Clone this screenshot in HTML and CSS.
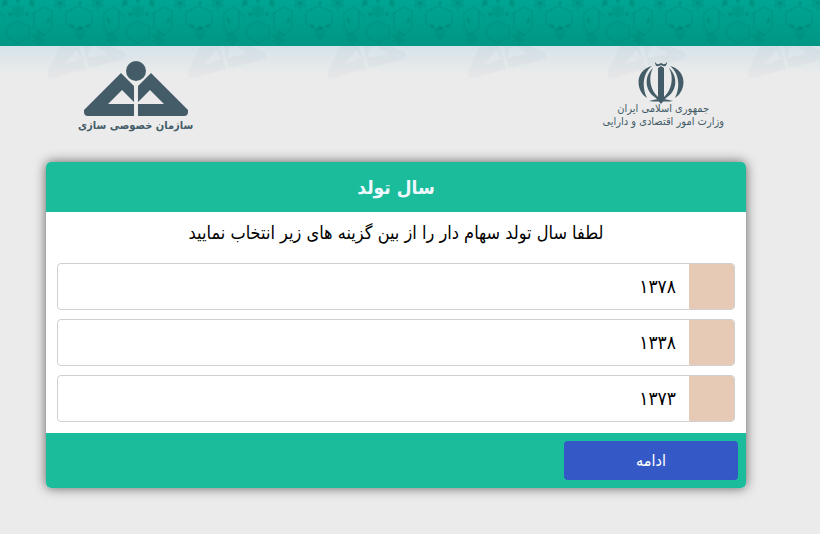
FILE: index.html
```
<!DOCTYPE html>
<html lang="fa" dir="rtl">
<head>
  <meta charset="UTF-8">
  <meta name="viewport" content="width=device-width, initial-scale=1.0">
  <title>سال تولد</title>
  <link rel="stylesheet" href="styles.css">
</head>
<body>
  <!-- top band -->
  <div class="top-band">
    <svg width="100%" height="46" aria-hidden="true">
      <defs>
        <path id="star" d="M0-8 3-4 7-4 5 0 7 4 3 4 0 8-3 4-7 4-5 0-7-4-3-4Z"/>
        <pattern id="girih" width="120" height="46" patternUnits="userSpaceOnUse">
          <g fill="none" stroke="#008170" stroke-opacity=".22" stroke-width="2">
            <path d="M18 21 29 27V37L18 43 7 37V27Z"/>
            <path d="M34 13 43 7 52 11V28L43 35 34 28Z"/>
            <path d="M104 13 113 7 119 11V28L111 35 104 28Z"/>
            <path d="M66 12 78 6 92 12V24L78 30 66 24Z"/>
            <path d="M0 12 6 18M30 18 36 12M30 0 34 8M2 8 6 0"/>
          </g>
          <g fill="#007e6e" fill-opacity=".2">
            <use href="#star" x="18" y="11"/>
            <use href="#star" x="39" y="38"/>
            <use href="#star" x="60" y="3"/>
            <use href="#star" x="80" y="33"/>
            <use href="#star" x="98" y="3"/>
            <use href="#star" x="112" y="38"/>
          </g>
          <g fill="#007a6a" fill-opacity=".32">
            <circle cx="18" cy="1" r="2"/>
            <circle cx="10" cy="14" r="2"/>
            <circle cx="27" cy="14" r="2"/>
            <circle cx="5" cy="3" r="3"/>
            <circle cx="32" cy="3" r="3"/>
            <path d="M49 17 51 20 48 24 46 21Z"/>
            <path d="M108 17 106 20 109 24 111 21Z"/>
            <circle cx="72" cy="26" r="2"/>
            <circle cx="88" cy="26" r="2"/>
            <circle cx="80" cy="28" r="2"/>
            <circle cx="60" cy="3" r="2"/>
            <circle cx="80" cy="3" r="2"/>
            <circle cx="98" cy="3" r="2"/>
            <circle cx="18" cy="38" r="1"/>
          </g>
        </pattern>
      </defs>
      <rect width="100%" height="46" fill="url(#girih)"/>
    </svg>
  </div>

  <!-- faded logos behind the header -->
  <div class="watermark">
    <svg width="100%" height="40" aria-hidden="true">
      <defs>
        <pattern id="ghost" width="140" height="40" patternUnits="userSpaceOnUse">
          <path fill="#445c68" fill-opacity=".035" fill-rule="evenodd" d="M60 0 48 25Q46 33 54 32L86 23 79 0ZM76 4 65 18 82 13ZM83 0 89 22 122 14Q130 10 124 6L110 0ZM90 1 87 12 108 8 96 0Z"/>
        </pattern>
      </defs>
      <rect width="100%" height="40" fill="url(#ghost)"/>
    </svg>
  </div>

  <header class="logos">
    <div class="logo ministry">
      <svg width="50" height="44" viewBox="0 0 50 44" fill="#445c68" aria-hidden="true">
        <path d="M17 1Q19 4 21 3L23 2 25 3Q27 4 29 1 29 6 25 5L23 4 21 5Q17 6 17 1Z"/>
        <path d="M20 7 23 5 26 7V37H28L23 43 18 37H20Z"/>
        <path d="M14 5C-3 9-3 29 9 37 4 27 4 13 14 5ZM32 5C49 9 49 29 37 37 42 27 42 13 32 5Z"/>
        <path d="M15 7C5 16 7 32 20 38V36C12 29 10 16 15 7ZM31 7C41 16 39 32 26 38V36C34 29 36 16 31 7Z"/>
        <path d="M11 40Q18 38 23 38 28 38 35 40 28 41 23 40 18 41 11 40Z"/>
      </svg>
      <span>جمهوری اسلامی ایران</span>
      <span>وزارت امور اقتصادی و دارایی</span>
    </div>
    <div class="logo organization">
      <svg width="104" height="56" viewBox="0 0 104 56" fill="#445c68" aria-hidden="true">
        <circle cx="52" cy="10" r="10"/>
        <path fill-rule="evenodd" d="M37 12 50 25V55H4Q0 55 0 51V49ZM38 29 24 43H50V41Z"/>
        <path fill-rule="evenodd" d="M67 12 54 25V55H100Q104 55 104 51V49ZM66 29 54 41V43H80Z"/>
      </svg>
      <span>سازمان خصوصی سازی</span>
    </div>
  </header>

  <form class="card">
    <h1>سال تولد</h1>
    <fieldset class="card-body">
      <legend>لطفا سال تولد سهام دار را از بین گزینه های زیر انتخاب نمایید</legend>
      <label class="option">
        <input type="radio" name="year" value="1378">
        <span>۱۳۷۸</span>
      </label>
      <label class="option">
        <input type="radio" name="year" value="1338">
        <span>۱۳۳۸</span>
      </label>
      <label class="option">
        <input type="radio" name="year" value="1373">
        <span>۱۳۷۳</span>
      </label>
    </fieldset>
    <div class="card-footer">
      <button type="submit">ادامه</button>
    </div>
  </form>
</body>
</html>
```

FILE: styles.css
```
* {
  box-sizing: border-box;
}
body {
  margin: 0;
  position: relative;
  background: #ebebeb;
  color: #000;
  font-family: "DejaVu Sans Condensed", "DejaVu Sans", sans-serif;
}
svg {
  display: block;
}

/* top band */
.top-band {
  height: 46px;
  background: linear-gradient(#00a593, #009684);
}
.watermark {
  position: absolute;
  top: 46px;
  left: 0;
  right: 0;
  height: 40px;
  background: linear-gradient(#d6e3e9, #ebebeb 28px);
}

/* logos */
.logos {
  position: relative;
  display: flex;
  justify-content: space-between;
  height: 116px;
  padding: 15px 96px 0 78px;
  color: #445c68;
}
.logo {
  display: flex;
  flex-direction: column;
  align-items: center;
  white-space: nowrap;
}
.ministry {
  font-size: 11px;
  line-height: 13px;
}
.ministry svg {
  margin-bottom: -3px;
}
.organization {
  font-size: 11px;
  font-weight: bold;
  line-height: 18px;
}

/* card */
.card {
  position: relative;
  margin: 0 74px 46px 46px;
  border-radius: 5px;
  background: #fff;
  box-shadow: 0 0 12px rgba(0, 0, 0, 0.6);
}
.card h1 {
  margin: 0;
  border-radius: 5px 5px 0 0;
  background: #1bbc9b;
  color: #f0f8ff;
  font-size: 19px;
  line-height: 50px;
  text-align: center;
}
.card-body {
  display: flex;
  flex-direction: column;
  gap: 9px;
  min-width: 0;
  margin: 0;
  padding: 0 11px 11px;
  border: 0;
}
.card-body legend {
  width: 100%;
  padding: 0 0 9px;
  font-size: 18px;
  line-height: 42px;
  text-align: center;
}
.option {
  display: flex;
  align-items: stretch;
  height: 47px;
  border: 1px solid #ced0d2;
  border-radius: 4px;
  overflow: hidden;
  cursor: pointer;
}
.option input {
  appearance: none;
  width: 45px;
  margin: 0;
  background: #e6cab5;
  cursor: pointer;
}
.option input:checked {
  background: #3459c7;
}
.option span {
  padding: 0 13px;
  font-size: 19px;
  line-height: 45px;
}
.card-footer {
  padding: 8px;
  border-radius: 0 0 5px 5px;
  background: #1bbc9b;
}
.card-footer button {
  display: block;
  width: 25%;
  min-width: 174px;
  height: 39px;
  border: 0;
  border-radius: 4px;
  background: #3459c7;
  color: #fff;
  font-family: inherit;
  font-size: 16px;
  cursor: pointer;
}
```
